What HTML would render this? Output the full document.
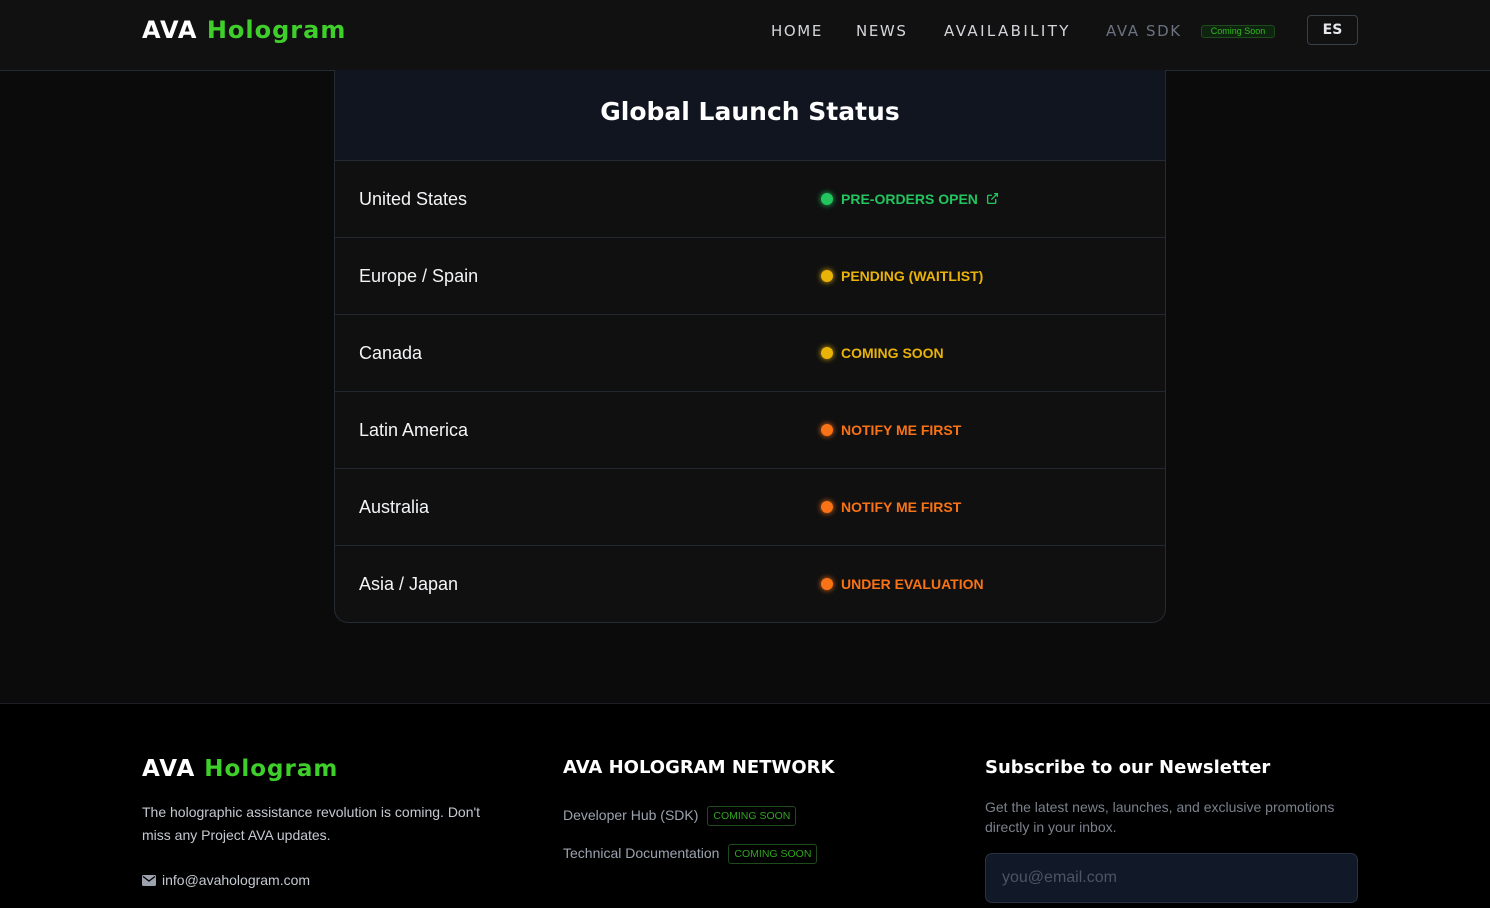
<!DOCTYPE html>
<html><head><style>
*{margin:0;padding:0;box-sizing:border-box}
body{width:1490px;height:908px;overflow:hidden;background:#0b0b0b;font-family:"Liberation Sans",sans-serif;color:#fff;position:relative}
.hdr{position:absolute;left:0;top:0;width:1490px;height:71px;background:#111112;border-bottom:1px solid #262a31}
.logo{position:absolute;font-family:"DejaVu Sans",sans-serif;font-weight:bold;letter-spacing:1px}
.g{color:#3fcf2a}
.nav{position:absolute;top:22px;font-family:"DejaVu Sans",sans-serif;font-size:15px;letter-spacing:1.6px;color:#d4d6da}
.cs{position:absolute;left:1201px;top:25px;width:74px;height:13px;border:1px solid #1f4a1c;border-radius:3px;background:#0f2410;color:#33b81f;font-size:9px;text-align:center;line-height:11px}
.es{position:absolute;left:1307px;top:15px;width:51px;height:30px;border:1px solid #3a404a;border-radius:4px;text-align:center;line-height:28px;font-family:"DejaVu Sans",sans-serif;font-weight:bold;font-size:14px;color:#e5e7eb}
.card{position:absolute;left:334px;top:70px;width:832px;height:553px;border:1px solid #262b33;border-top:none;border-radius:0 0 14px 14px;background:#101010;overflow:hidden}
.ch{height:91px;background:#111520;border-bottom:1px solid #262b33;text-align:center;font-family:"DejaVu Sans",sans-serif;font-weight:bold;font-size:25px;line-height:84px}
.row{height:77px;border-bottom:1px solid #232830;position:relative}
.row:last-child{border-bottom:none}
.row .c{position:absolute;left:24px;top:28px;font-size:18px;color:#f3f4f6}
.row .s{position:absolute;left:486px;top:30px;font-size:14px;font-weight:bold}
.row .d{position:absolute;left:486px;top:32px;width:12px;height:12px;border-radius:50%}
.row .s span{margin-left:20px}
.foot{position:absolute;left:0;top:703px;width:1490px;height:205px;background:#000;border-top:1px solid #1c1f24}
.fh{position:absolute;font-family:"DejaVu Sans",sans-serif;font-weight:bold;font-size:18px}
.gray{color:#9ca3af}
.tag{display:inline-block;border:1px solid #1f4a1c;border-radius:3px;color:#2fa51e;font-size:10.5px;padding:3px 5px;margin-left:9px;vertical-align:1px}
</style></head><body>
<div class="hdr">
<div class="logo" style="left:142px;top:16px;font-size:24px">AVA <span class="g">Hologram</span></div>
<div class="nav" style="left:771px">HOME</div>
<div class="nav" style="left:856px">NEWS</div>
<div class="nav" style="left:944px;letter-spacing:2.4px">AVAILABILITY</div>
<div class="nav" style="left:1106px;color:#6b7280">AVA SDK</div>
<div class="cs">Coming Soon</div>
<div class="es">ES</div>
</div>
<div class="card">
<div class="ch">Global Launch Status</div>
<div class="row"><div class="c">United States</div><div class="d" style="background:#22c55e;box-shadow:0 0 6px #22c55e"></div><div class="s" style="color:#22c55e"><span>PRE-ORDERS OPEN</span> <svg width="13" height="13" viewBox="0 0 24 24" fill="none" stroke="#22c55e" stroke-width="2.5" style="margin-left:4px;vertical-align:-1px"><path d="M18 13v6a2 2 0 0 1-2 2H5a2 2 0 0 1-2-2V8a2 2 0 0 1 2-2h6M15 3h6v6M10 14L21 3"/></svg></div></div>
<div class="row"><div class="c">Europe / Spain</div><div class="d" style="background:#eab308;box-shadow:0 0 6px #eab308"></div><div class="s" style="color:#eab308"><span>PENDING (WAITLIST)</span></div></div>
<div class="row"><div class="c">Canada</div><div class="d" style="background:#eab308;box-shadow:0 0 6px #eab308"></div><div class="s" style="color:#eab308"><span>COMING SOON</span></div></div>
<div class="row"><div class="c">Latin America</div><div class="d" style="background:#f97316;box-shadow:0 0 6px #f97316"></div><div class="s" style="color:#f97316"><span>NOTIFY ME FIRST</span></div></div>
<div class="row"><div class="c">Australia</div><div class="d" style="background:#f97316;box-shadow:0 0 6px #f97316"></div><div class="s" style="color:#f97316"><span>NOTIFY ME FIRST</span></div></div>
<div class="row"><div class="c">Asia / Japan</div><div class="d" style="background:#f97316;box-shadow:0 0 6px #f97316"></div><div class="s" style="color:#f97316"><span>UNDER EVALUATION</span></div></div>
</div>
<div class="foot">
<div class="logo" style="left:142px;top:52px;font-size:23px">AVA <span class="g">Hologram</span></div>
<div style="position:absolute;left:142px;top:97px;width:366px;font-size:14px;line-height:23px;color:#c5c9d0">The holographic assistance revolution is coming. Don't miss any Project AVA updates.</div>
<div style="position:absolute;left:142px;top:168px;font-size:14px;color:#c5c9d0"><svg width="14" height="11" viewBox="0 0 14 11" style="vertical-align:-1px;margin-right:6px"><rect width="14" height="11" rx="1.5" fill="#9ca3af"/><path d="M1 1.5L7 6l6-4.5" stroke="#000" stroke-width="1.3" fill="none"/></svg>info@avahologram.com</div>
<div class="fh" style="left:563px;top:53px">AVA HOLOGRAM NETWORK</div>
<div style="position:absolute;left:563px;top:102px;font-size:14px" class="gray">Developer Hub (SDK)<span class="tag">COMING SOON</span></div>
<div style="position:absolute;left:563px;top:140px;font-size:14px" class="gray">Technical Documentation<span class="tag">COMING SOON</span></div>
<div class="fh" style="left:985px;top:53px">Subscribe to our Newsletter</div>
<div style="position:absolute;left:985px;top:93px;width:380px;font-size:14px;line-height:20px;color:#7b818b">Get the latest news, launches, and exclusive promotions directly in your inbox.</div>
<div style="position:absolute;left:985px;top:149px;width:373px;height:50px;border:1px solid #2a3140;border-radius:7px;background:#111827;padding:15px 16px;font-size:16px;color:#4b5563">you@email.com</div>
</div>
</body></html>
